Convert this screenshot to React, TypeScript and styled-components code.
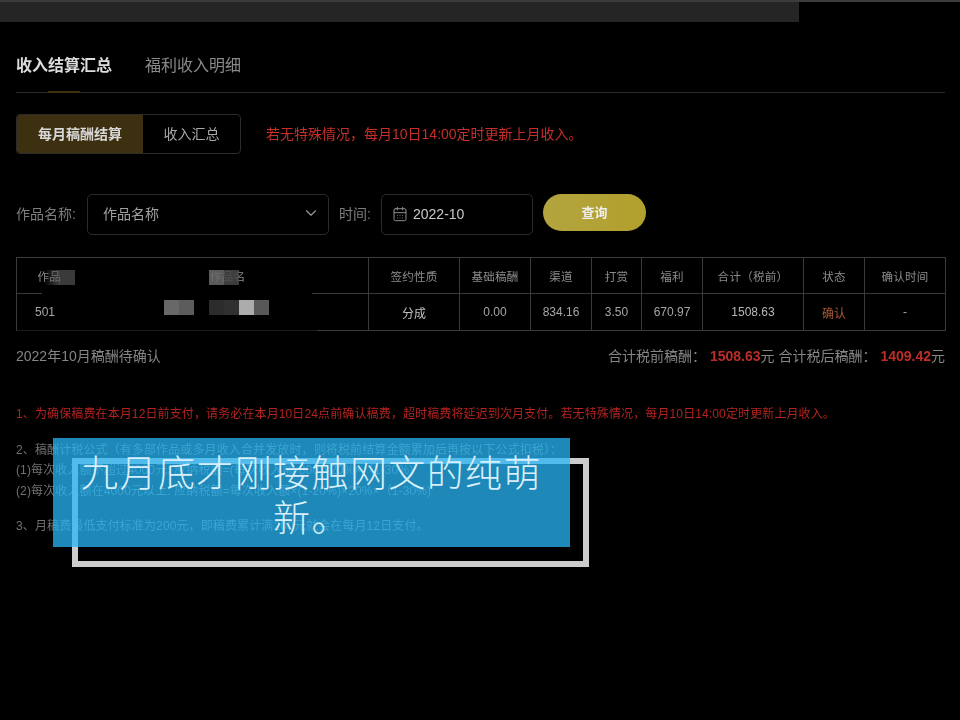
import React from "react";
import styled, { createGlobalStyle } from "styled-components";
import { CalendarDays, ChevronDown } from "lucide-react";

const Global = createGlobalStyle`
  html, body { margin: 0; padding: 0; background: #000; }
  body { font-family: "Liberation Sans", "Noto Sans CJK SC", sans-serif; width: 960px; height: 720px; overflow: hidden; }
`;

const Stage = styled.div`
  position: relative;
  width: 960px;
  height: 720px;
  background: #000;
  overflow: hidden;
`;
const Soft = styled.div`
  filter: blur(0.45px);
`;
const TopEdge = styled.div`
  height: 22px;
  border-top: 2px solid #3b3b3b;
  box-sizing: border-box;
`;
const TopFill = styled.div`
  width: 799px;
  height: 20px;
  background: #252525;
`;
const Content = styled.main`
  padding: 0 15px 0 16px;
`;
const Tabs = styled.nav`
  display: flex;
  gap: 33px;
  height: 71px;
  box-sizing: border-box;
  padding-top: 32px;
  border-bottom: 1px solid #2a2a2a;
  position: relative;
`;
const Tab = styled.span<{ $active?: boolean }>`
  font-size: 16px;
  line-height: 24px;
  font-weight: ${(p) => (p.$active ? 700 : 400)};
  color: ${(p) => (p.$active ? "#dcdcdc" : "#8a8a8a")};
`;
const TabMark = styled.i`
  position: absolute;
  left: 32px;
  bottom: -1px;
  width: 32px;
  height: 2px;
  background: #3d3010;
`;
const NoticeRow = styled.section`
  display: flex;
  align-items: center;
  gap: 25px;
  margin-top: 21px;
`;
const Segment = styled.div`
  display: flex;
  width: 225px;
  height: 40px;
  box-sizing: border-box;
  border: 1px solid #2b2b2b;
  border-radius: 4px;
  overflow: hidden;
`;
const SegmentItem = styled.div<{ $active?: boolean }>`
  display: flex;
  align-items: center;
  justify-content: center;
  height: 100%;
  box-sizing: border-box;
  padding-bottom: 2px;
  flex: ${(p) => (p.$active ? "0 0 126px" : "1")};
  background: ${(p) => (p.$active ? "#3d3010" : "transparent")};
  color: ${(p) => (p.$active ? "#d8d8d8" : "#a8a8a8")};
  font-weight: ${(p) => (p.$active ? 700 : 400)};
  font-size: 14px;
`;
const Notice = styled.p`
  margin: 0;
  padding-bottom: 3px;
  font-size: 14px;
  color: #c62f2a;
`;
const FilterRow = styled.section`
  display: flex;
  align-items: flex-start;
  margin-top: 40px;
  height: 41px;
`;
const Label = styled.label<{ $gap: number }>`
  font-size: 14px;
  line-height: 41px;
  color: #7e7e7e;
  white-space: nowrap;
  width: ${(p) => p.$gap}px;
`;
const Field = styled.div<{ $w: number }>`
  display: flex;
  align-items: center;
  width: ${(p) => p.$w}px;
  height: 41px;
  box-sizing: border-box;
  border: 1px solid #2b2b2b;
  border-radius: 5px;
  color: #a0a0a0;
  font-size: 14px;
`;
const SelectField = styled(Field)`
  justify-content: space-between;
  padding: 0 8px 3px 15px;
  margin-right: 10px;
`;
const DateField = styled(Field)`
  gap: 5px;
  padding: 0 0 2px 10px;
  margin-right: 10px;
  color: #c8c8c8;
`;
const Query = styled.button`
  width: 103px;
  height: 37px;
  padding: 0 0 2px;
  border: 0;
  border-radius: 19px;
  background: linear-gradient(90deg, #b3a43f, #b2a02c);
  color: #eeeeee;
  font: 700 13px "Liberation Sans", "Noto Sans CJK SC", sans-serif;
`;
const Table = styled.table`
  width: 929px;
  margin-top: 22px;
  border-collapse: collapse;
  table-layout: fixed;
`;
const Th = styled.th<{ $side?: "left" | "right" }>`
  height: 35px;
  padding: 0 ${(p) => (p.$side === "right" ? "6px" : "0")} 0 0;
  border: 1px solid #3a3a3a;
  border-right: ${(p) => (p.$side === "right" ? "0" : "1px solid #3a3a3a")};
  border-left: ${(p) => (p.$side === "left" ? "0" : "1px solid #3a3a3a")};
  font-size: 11.5px;
  font-weight: 400;
  color: #8c8c8c;
  letter-spacing: 0.3px;
`;
const Td = styled.td<{ $tone?: string; $left?: boolean }>`
  height: 36px;
  padding: 0 0 0 ${(p) => (p.$left ? "18px" : "0")};
  border: 1px solid #3a3a3a;
  text-align: ${(p) => (p.$left ? "left" : "center")};
  font-size: 12px;
  color: ${(p) => p.$tone || "#a6a6a6"};
`;
const SummaryRow = styled.section`
  display: flex;
  justify-content: space-between;
  align-items: center;
  margin-top: 14px;
  height: 20px;
  font-size: 14px;
  color: #858585;
`;
const Amount = styled.b`
  color: #bd2d28;
  margin-left: 4px;
`;
const Notes = styled.section`
  margin-top: 39px;
  font-size: 12px;
  letter-spacing: 0.12px;
  line-height: 20.5px;
  color: #707070;
`;
const Note = styled.p<{ $red?: boolean; $gap?: number }>`
  margin: 0 0 ${(p) => p.$gap ?? 0}px;
  color: ${(p) => (p.$red ? "#b3231f" : "#707070")};
  white-space: nowrap;
`;
const Strip = styled.div<{ $x: number; $y: number }>`
  position: absolute;
  left: ${(p) => p.$x}px;
  top: ${(p) => p.$y}px;
  display: flex;
`;
const Px = styled.i<{ $c: string }>`
  display: block;
  width: 15px;
  height: 15px;
  background: ${(p) => p.$c};
`;
const Smear = styled.i<{ $x: number; $y: number; $w: number; $h: number; $c: string }>`
  position: absolute;
  left: ${(p) => p.$x}px;
  top: ${(p) => p.$y}px;
  width: ${(p) => p.$w}px;
  height: ${(p) => p.$h}px;
  background: ${(p) => p.$c};
`;
const Frame = styled.div`
  position: absolute;
  left: 72px;
  top: 458px;
  width: 517px;
  height: 109px;
  box-sizing: border-box;
  border: 6px solid #cccccc;
`;
const Caption = styled.div`
  position: absolute;
  left: 53px;
  top: 438px;
  width: 517px;
  height: 109px;
  box-sizing: border-box;
  padding: 11px 24px 0;
  background: rgba(40, 181, 245, 0.75);
  color: #d7effa;
  font-family: "Noto Sans CJK SC", sans-serif;
  font-size: 37px;
  font-weight: 300;
  line-height: 45px;
  letter-spacing: 1.4px;
  text-align: center;
`;

const widths = [71, 281, 91, 71, 61, 50, 61, 101, 61, 81];

export default function App() {
  return (
    <Stage>
      <Global />
      <Soft>
        <TopEdge>
          <TopFill />
        </TopEdge>
        <Content>
          <Tabs>
            <Tab $active>收入结算汇总</Tab>
            <Tab>福利收入明细</Tab>
            <TabMark />
          </Tabs>
          <NoticeRow>
            <Segment>
              <SegmentItem $active>每月稿酬结算</SegmentItem>
              <SegmentItem>收入汇总</SegmentItem>
            </Segment>
            <Notice>若无特殊情况，每月10日14:00定时更新上月收入。</Notice>
          </NoticeRow>
          <FilterRow>
            <Label $gap={71}>作品名称:</Label>
            <SelectField $w={242}>
              作品名称
              <ChevronDown size={18} strokeWidth={1.5} color="#9a9a9a" />
            </SelectField>
            <Label $gap={42}>时间:</Label>
            <DateField $w={152}>
              <CalendarDays size={16} strokeWidth={1.5} color="#8e8e8e" />
              2022-10
            </DateField>
            <Query>查询</Query>
          </FilterRow>
          <Table>
            <colgroup>
              {widths.map((w, i) => (
                <col key={i} style={{ width: w }} />
              ))}
            </colgroup>
            <thead>
              <tr>
                <Th $side="right">作品</Th>
                <Th $side="left">作品名</Th>
                <Th>签约性质</Th>
                <Th>基础稿酬</Th>
                <Th>渠道</Th>
                <Th>打赏</Th>
                <Th>福利</Th>
                <Th>合计（税前）</Th>
                <Th>状态</Th>
                <Th>确认时间</Th>
              </tr>
            </thead>
            <tbody>
              <tr>
                <Td colSpan={2} $left>501</Td>
                <Td $tone="#c0c0c0">分成</Td>
                <Td>0.00</Td>
                <Td>834.16</Td>
                <Td>3.50</Td>
                <Td>670.97</Td>
                <Td $tone="#b8b8b8">1508.63</Td>
                <Td $tone="#a85a38">确认</Td>
                <Td>-</Td>
              </tr>
            </tbody>
          </Table>
          <SummaryRow>
            <span>2022年10月稿酬待确认</span>
            <span>
              合计税前稿酬：<Amount>1508.63</Amount>元 合计税后稿酬：<Amount>1409.42</Amount>元
            </span>
          </SummaryRow>
          <Notes>
            <Note $red $gap={15}>1、为确保稿费在本月12日前支付，请务必在本月10日24点前确认稿费，超时稿费将延迟到次月支付。若无特殊情况，每月10日14:00定时更新上月收入。</Note>
            <Note>2、稿酬计税公式（有多部作品或多月收入合并发放时，则将税前结算金额累加后再按以下公式扣税）：</Note>
            <Note>(1)每次收入额不超过4000元: 应纳税额=(每次收入额-800)×20%×（1-30%)</Note>
            <Note $gap={15}>(2)每次收入额在4000元以上: 应纳税额=每次收入额×(1-20%)×20%×（1-30%)</Note>
            <Note>3、月稿费最低支付标准为200元，即稿费累计满200元就会在每月12日支付。</Note>
          </Notes>
        </Content>
      </Soft>
      <Smear $x={42} $y={284} $w={270} $h={17} $c="#000" />
      <Smear $x={17} $y={329} $w={300} $h={2} $c="rgba(0,0,0,.55)" />
      <Strip $x={45} $y={270}>
        <Px $c="linear-gradient(90deg,rgba(40,40,40,.1),rgba(90,90,90,.75))" />
        <Px $c="rgba(68,68,68,.85)" />
      </Strip>
      <Strip $x={209} $y={270}>
        <Px $c="rgba(106,106,106,.85)" />
        <Px $c="rgba(72,72,72,.85)" />
      </Strip>
      <Strip $x={164} $y={300}>
        <Px $c="#686868" />
        <Px $c="#5c5c5c" />
      </Strip>
      <Strip $x={209} $y={300}>
        <Px $c="#2c2c2c" />
        <Px $c="#303030" />
        <Px $c="#acacac" />
        <Px $c="#585858" />
      </Strip>
      <Frame />
      <Caption>九月底才刚接触网文的纯萌新。</Caption>
    </Stage>
  );
}
